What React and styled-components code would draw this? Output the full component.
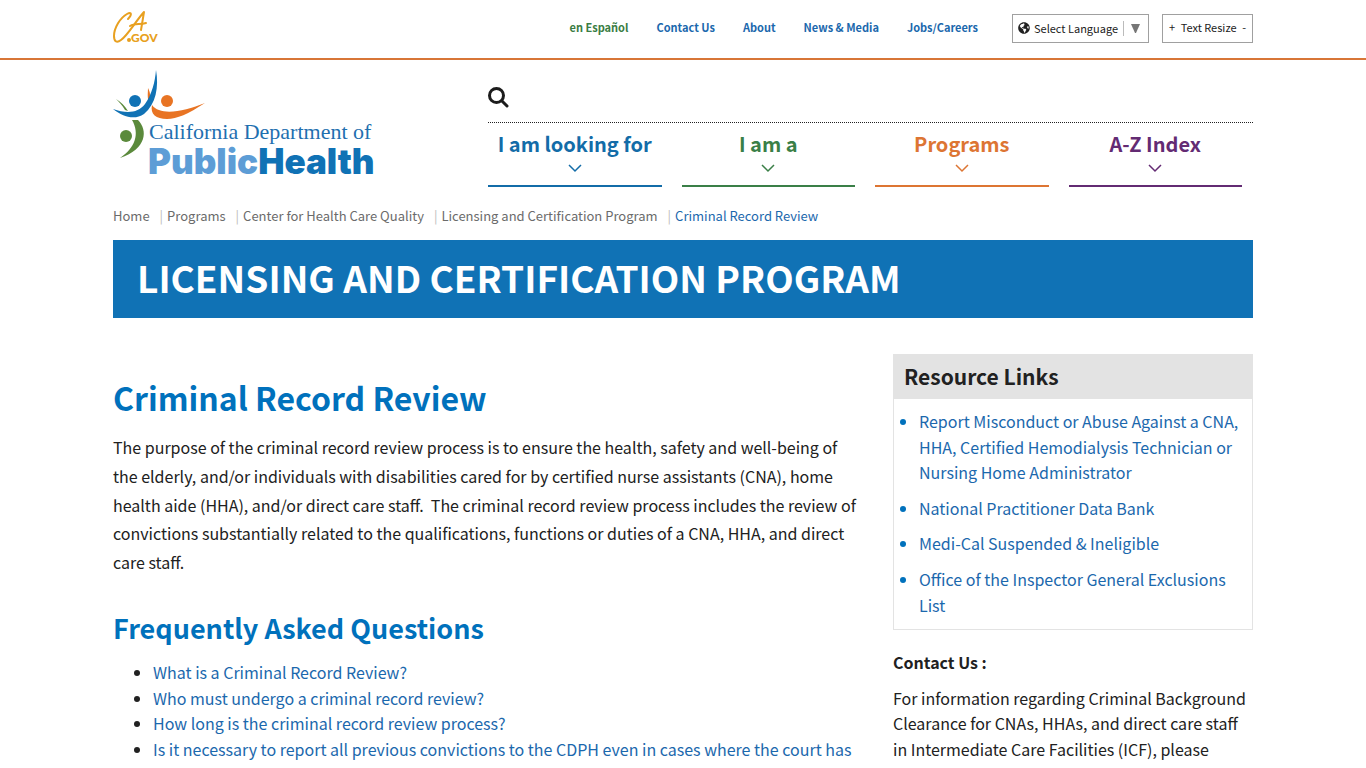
import React from "react";
import styled, { createGlobalStyle } from "styled-components";
import { FaGlobeAmericas } from "react-icons/fa";

const blue = "#0071bc";
const link = "#1b68ad";

const GlobalStyle = createGlobalStyle`
  *, *::before, *::after { box-sizing: border-box; }
  body {
    margin: 0;
    background: #fff;
    color: #212121;
    font-family: "Noto Sans CJK SC", "Noto Sans", sans-serif;
    font-size: 16px;
    line-height: 1.6;
  }
  a { color: ${link}; text-decoration: none; }
  a:hover { text-decoration: underline; }
  button, select { font: inherit; color: inherit; background: none; border: 0; padding: 0; cursor: pointer; }
`;

const Container = styled.div`
  max-width: 1170px;
  margin: 0 auto;
  padding: 0 15px;
`;

const TopBar = styled.div`
  border-bottom: 2px solid #d87637;
`;

const TopBarInner = styled(Container)`
  display: flex;
  align-items: center;
  justify-content: space-between;
  height: 58px;
  padding-bottom: 2px;
`;

const HomeLink = styled.a`
  svg { display: block; }
`;

const UtilityNav = styled.nav`
  display: flex;
  align-items: center;
`;

const UtilityLink = styled.a`
  margin-right: 28px;
  padding-bottom: 2px;
  font-size: 11px;
  line-height: 16px;
  font-weight: 700;
  color: ${(p) => p.$color || link};
`;

const LanguageBox = styled.label`
  display: flex;
  align-items: center;
  height: 29px;
  margin: 0 13px 0 6px;
  padding: 0 8px 0 5px;
  border: 1px solid #a0a0a0;
  font-size: 11px;

  select {
    appearance: none;
    width: 85px;
    margin-left: 4px;
    line-height: 16px;
    outline-offset: 2px;
  }
`;

const Caret = styled.span`
  display: flex;
  align-items: center;
  height: 15px;
  margin-left: 4px;
  padding-left: 7px;
  border-left: 1px solid #bbb;
`;

const ResizeBox = styled.div`
  display: flex;
  align-items: center;
  justify-content: space-between;
  width: 91px;
  height: 29px;
  padding: 0 6px 2px;
  border: 1px solid #a0a0a0;
  font-size: 11px;
  line-height: 16px;
`;

const Masthead = styled(Container)`
  display: flex;
  padding-top: 10px;
`;

const Brand = styled.a`
  flex: 0 0 375px;
  svg { display: block; }
`;

const MainNav = styled.div`
  flex: 1;
  padding-top: 17px;
`;

const SearchRow = styled.div`
  height: 36px;
  border-bottom: 1px dotted #212121;
`;

const SearchButton = styled.button`
  display: block;
  svg { display: block; }
`;

const Menu = styled.nav`
  display: grid;
  grid-template-columns: repeat(4, 1fr);
  gap: 20px;
  padding: 5px 11px 0 0;
`;

const MenuButton = styled.button`
  display: flex;
  flex-direction: column;
  align-items: center;
  height: 59px;
  border-bottom: 2px solid ${(p) => p.$color};
  color: ${(p) => p.$color};
  font-size: 20px;
  line-height: 32px;
  font-weight: 700;

  svg { margin-top: 4px; }
`;

const Breadcrumbs = styled.ol`
  display: flex;
  margin: 0;
  padding: 18px 0 13px;
  list-style: none;
  font-size: 13px;
  line-height: 22px;

  a { color: #6b6b6b; }
  a[aria-current] { color: ${link}; }

  li + li { margin-left: 10px; }
  li + li::before { content: "|"; margin-right: 4px; color: #bbb; }
`;

const Banner = styled.div`
  padding: 0 24px 4px;
  background: #1072b5;
  color: #fff;
  font-size: 37px;
  line-height: 74px;
  font-weight: 700;
`;

const Columns = styled.div`
  display: flex;
  margin: 36px -15px 0;
`;

const Article = styled.main`
  flex: 0 0 66.6667%;
  padding: 15px 15px 0;

  p {
    margin: 0 0 23px;
    line-height: 1.8;
  }
`;

const PageTitle = styled.h1`
  margin: 0 0 8px;
  color: ${blue};
  font-size: 32px;
  line-height: 56px;
  font-weight: 700;
`;

const SectionTitle = styled.h2`
  margin: 0;
  padding: 5px 0 9px;
  color: ${blue};
  font-size: 27px;
  line-height: 46px;
  font-weight: 700;
`;

const QuestionList = styled.ul`
  margin: 0;
  padding-left: 40px;
`;

const Sidebar = styled.aside`
  flex: 0 0 33.3333%;
  padding: 0 15px;

  p { margin: 10px 0 0; }
`;

const Panel = styled.section`
  border: 1px solid #e3e3e3;
  margin-bottom: 20px;
`;

const PanelTitle = styled.h2`
  margin: 0;
  padding: 0 10px 2px;
  background: #e3e3e3;
  font-size: 21px;
  line-height: 42px;
  font-weight: 700;
`;

const ResourceList = styled.ul`
  margin: 0;
  padding: 10px 10px 1px 25px;

  li { margin-bottom: 10px; }
  li::marker { color: ${blue}; }
`;

const CaGovLogo = () => (
  <svg width="46" height="36" viewBox="0 0 46 36" role="img" aria-label="CA.gov">
    <g fill="none" stroke="#e8a020" strokeLinecap="round" strokeLinejoin="round">
      <path d="M15 9C19 5 19 1 14 4C7 8 1 18 1 26C1 32 4 33 8 30C15 25 22 12 31 2C30 8 29 14 28 20" strokeWidth="2" />
      <path d="M17 16C22 13 27 15 33 13" strokeWidth="2" />
    </g>
    <circle cx="16" cy="30" r="2" fill="#e8a020" />
    <text x="18" y="32" fill="#e8a020" fontFamily="Lato, sans-serif" fontWeight="900" fontSize="12">GOV</text>
  </svg>
);

const DepartmentLogo = () => (
  <svg width="268" height="112" viewBox="0 0 268 112" role="img" aria-label="California Department of Public Health">
    <path d="M35 18C37 22 38 25 36 32C34 28 35 22 35 18Z" fill="#e87424" />
    <path d="M3 29C8 32 12 36 15 41L12 40C9 35 6 32 3 29Z" fill="#5b8a3c" />
    <path d="M43 0C46 17 43 34 31 44C21 51 9 46 0 39C14 44 25 43 32 34C39 24 42 12 43 0Z" fill="#1072b5" />
    <circle cx="22" cy="31" r="6" fill="#1072b5" />
    <path d="M39 35C47 46 70 42 92 33C75 44 64 49 54 49C43 49 37 44 39 35Z" fill="#e87424" />
    <circle cx="54" cy="31" r="6" fill="#e87424" />
    <path d="M19 50H25C35 60 34 79 7 88C22 78 27 64 19 50Z" fill="#5b8a3c" />
    <circle cx="13" cy="66" r="6" fill="#5b8a3c" />
    <text x="36" y="69" fill="#1f70b0" fontFamily="'Liberation Serif', serif" fontSize="22">California Department of</text>
    <text x="35" y="104" fontFamily="Inter, 'Liberation Sans', sans-serif" fontWeight="900" fontSize="35">
      <tspan fill="#5d9dd6">Public</tspan>
      <tspan fill="#1072b5">Health</tspan>
    </text>
  </svg>
);

const SearchIcon = () => (
  <svg width="21" height="21" viewBox="0 0 21 21" aria-hidden="true">
    <circle cx="8.500" cy="8.500" r="7" fill="none" stroke="#1c1c1c" strokeWidth="3" />
    <path d="M14 14L19 19" stroke="#1c1c1c" strokeWidth="3" strokeLinecap="round" />
  </svg>
);

const Chevron = () => (
  <svg width="14" height="9" viewBox="0 0 14 9" fill="none" stroke="currentColor" strokeWidth="1.500" aria-hidden="true">
    <path d="M1 1L7 7L13 1" />
  </svg>
);

const utilityLinks = [
  { label: "en Español", color: "#3a7d44" },
  { label: "Contact Us" },
  { label: "About" },
  { label: "News & Media" },
  { label: "Jobs/Careers" },
];

const menu = [
  { label: "I am looking for", color: "#136ca8" },
  { label: "I am a", color: "#3a7f47" },
  { label: "Programs", color: "#dd7533" },
  { label: "A-Z Index", color: "#632b73" },
];

const crumbs = ["Home", "Programs", "Center for Health Care Quality", "Licensing and Certification Program", "Criminal Record Review"];

const questions = [
  "What is a Criminal Record Review?",
  "Who must undergo a criminal record review?",
  "How long is the criminal record review process?",
  "Is it necessary to report all previous convictions to the CDPH even in cases where the court has",
];

const resources = [
  "Report Misconduct or Abuse Against a CNA, HHA, Certified Hemodialysis Technician or Nursing Home Administrator",
  "National Practitioner Data Bank",
  "Medi-Cal Suspended & Ineligible",
  "Office of the Inspector General Exclusions List",
];

export default function App() {
  return (
    <>
      <GlobalStyle />
      <header>
        <TopBar>
          <TopBarInner>
            <HomeLink href="#cagov"><CaGovLogo /></HomeLink>
            <UtilityNav aria-label="Utility">
              {utilityLinks.map((l) => (
                <UtilityLink key={l.label} href="#" $color={l.color}>{l.label}</UtilityLink>
              ))}
              <LanguageBox>
                <FaGlobeAmericas size={12} aria-hidden="true" />
                <select aria-label="Select Language" defaultValue="">
                  <option value="">Select Language</option>
                </select>
                <Caret>
                  <svg width="9" height="9" viewBox="0 0 9 9" aria-hidden="true"><path d="M0 0H9L5 9H4Z" fill="#767676" /></svg>
                </Caret>
              </LanguageBox>
              <ResizeBox>
                <button type="button" aria-label="Increase text size">+</button>
                <span>Text Resize</span>
                <button type="button" aria-label="Decrease text size">-</button>
              </ResizeBox>
            </UtilityNav>
          </TopBarInner>
        </TopBar>
        <Masthead>
          <Brand href="#home"><DepartmentLogo /></Brand>
          <MainNav>
            <SearchRow>
              <SearchButton type="button" aria-label="Search"><SearchIcon /></SearchButton>
            </SearchRow>
            <Menu aria-label="Main">
              {menu.map((m) => (
                <MenuButton key={m.label} type="button" $color={m.color}>
                  {m.label}
                  <Chevron />
                </MenuButton>
              ))}
            </Menu>
          </MainNav>
        </Masthead>
      </header>
      <Container>
        <nav aria-label="Breadcrumb">
          <Breadcrumbs>
            {crumbs.map((c, i) => (
              <li key={c}>
                <a href="#" aria-current={i === crumbs.length - 1 ? "page" : undefined}>{c}</a>
              </li>
            ))}
          </Breadcrumbs>
        </nav>
        <Banner>LICENSING AND CERTIFICATION PROGRAM</Banner>
        <Columns>
          <Article>
            <PageTitle>Criminal Record Review</PageTitle>
            <p>
              The purpose of the criminal record review process is to ensure the health, safety and well-being of
              the elderly, and/or individuals with disabilities cared for by certified nurse assistants (CNA), home
              health aide (HHA), and/or direct care staff.&nbsp; The criminal record review process includes the review of
              convictions substantially related to the qualifications, functions or duties of a CNA, HHA, and direct
              care staff.
            </p>
            <SectionTitle>Frequently Asked Questions</SectionTitle>
            <QuestionList>
              {questions.map((q) => (
                <li key={q}><a href="#">{q}</a></li>
              ))}
            </QuestionList>
          </Article>
          <Sidebar>
            <Panel>
              <PanelTitle>Resource Links</PanelTitle>
              <ResourceList>
                {resources.map((r) => (
                  <li key={r}><a href="#">{r}</a></li>
                ))}
              </ResourceList>
            </Panel>
            <strong>Contact Us :</strong>
            <p>
              For information regarding Criminal Background Clearance for CNAs, HHAs, and direct care staff in
              Intermediate Care Facilities (ICF), please
            </p>
          </Sidebar>
        </Columns>
      </Container>
    </>
  );
}
